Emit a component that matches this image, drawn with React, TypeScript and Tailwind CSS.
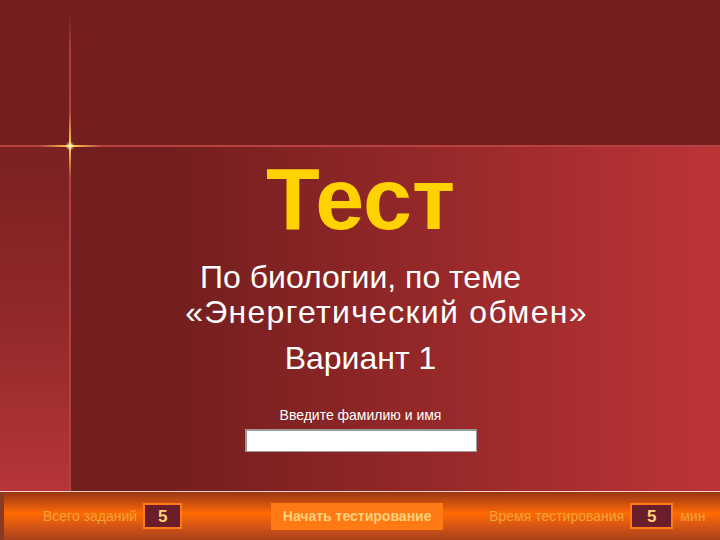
import * as React from "react";

// Стартовый экран теста
function CountBox({ value, wide }: { value: number; wide?: boolean }) {
  return (
    <div
      className={`flex h-[26px] items-center justify-center border-2 border-[#ff7a1a] bg-[#6b1d2c] text-[17px] font-bold leading-none text-[#ffd27a] ${
        wide ? "w-[43px]" : "w-[39px]"
      }`}
    >
      {value}
    </div>
  );
}

export default function App() {
  return (
    <div
      className="relative flex h-[540px] w-[720px] flex-col overflow-hidden bg-[#741f1e]"
      style={{ fontFamily: '"Liberation Sans", Arial, sans-serif' }}
    >
      {/* верхняя полоса */}
      <div className="h-[145px] shrink-0 bg-[#741f1e]" />

      {/* средняя часть */}
      <div className="flex flex-1 border-t-2 border-[#b84242]">
        <div className="w-[69px] shrink-0 bg-gradient-to-b from-[#7a2121] via-[#922829] via-50% to-[#b63639]" />
        <div className="flex flex-1 flex-col items-center border-l-2 border-[#b24140] bg-gradient-to-r from-[#731e1e] from-15% via-[#952829] via-55% to-[#bd3437] pr-[70px]">
          <h1 className="mt-[8px] text-[88px] font-bold leading-none text-[#ffd200]">
            Тест
          </h1>
          <div className="mt-[17px] flex flex-col items-center text-[32px] leading-[35px] text-white">
            <p>По биологии, по теме</p>
            <p className="ml-[52px] tracking-[1.3px]">«Энергетический обмен»</p>
            <p className="mt-[11px]">Вариант 1</p>
          </div>
          <p className="mt-[32px] text-[14px] leading-none text-white">
            Введите фамилию и имя
          </p>
          <input
            type="text"
            className="mt-[7px] h-[23px] w-[232px] border border-t-2 border-l-2 border-[#9a9a9a] bg-white outline-none"
          />
        </div>
      </div>

      {/* нижняя панель */}
      <div className="flex h-[49px] shrink-0 items-center border-t border-[#f4d0c8] bg-gradient-to-b from-[#9a3612] via-[#ff6a00] via-45% to-[#a8401a] text-[14px] text-[#f2a23a]">
        <div className="h-full w-[4px] bg-[#8a3a20]" />
        <span className="ml-[39px] font-light">Всего заданий</span>
        <div className="ml-[6px]">
          <CountBox value={5} />
        </div>
        <button className="ml-[89px] flex h-[27px] w-[172px] items-center justify-center bg-[#ff7a14] text-[14px] font-bold text-[#ffd27a]">
          Начать тестирование
        </button>
        <span className="ml-[46px] font-light">Время тестирования</span>
        <div className="ml-[6px]">
          <CountBox value={5} wide />
        </div>
        <span className="ml-[7px] font-light">мин</span>
      </div>

      {/* вертикальная линия над верхней полосой */}
      <div className="absolute left-[69px] top-[15px] h-[131px] w-[2px] bg-gradient-to-b from-transparent via-[#a8403f] via-25% to-[#b84242]" />
      {/* блик */}
      <div className="absolute left-[40px] top-[145px] h-[2px] w-[62px] bg-gradient-to-r from-transparent via-[#ffd44a] to-transparent" />
      <div className="absolute left-[69px] top-[112px] h-[66px] w-[2px] bg-gradient-to-b from-transparent via-[#ffd44a] to-transparent" />
      <div className="absolute left-[67px] top-[143px] h-[6px] w-[6px] rounded-full bg-[#fff2b0] blur-[1px]" />
    </div>
  );
}
